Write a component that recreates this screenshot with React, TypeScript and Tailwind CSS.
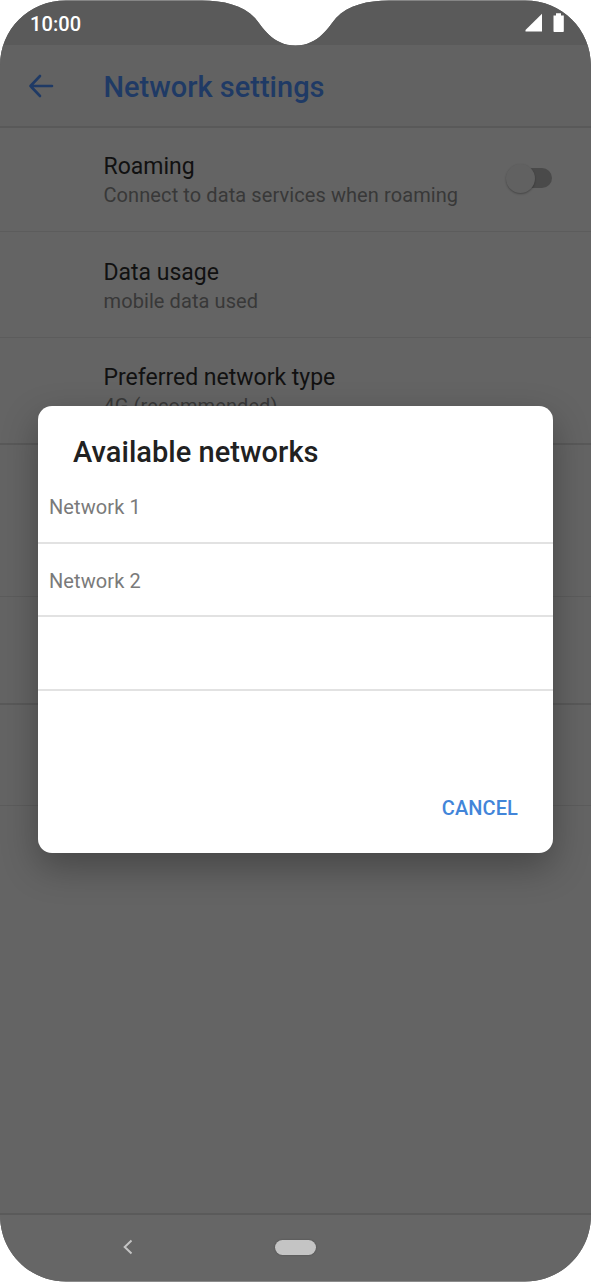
import React from "react";

type RowProps = { title?: string; detail?: string; className: string; children?: React.ReactNode };

function SettingRow({ title, detail, className, children }: RowProps) {
  return (
    <div className={`flex shrink-0 items-start justify-between pl-[103.5px] pr-[39px] ${className}`}>
      <div className="flex flex-col whitespace-nowrap">
        {title && <div className="text-[23px] leading-[30px] tracking-[-0.01px] text-[#111111]">{title}</div>}
        {detail && <div className="text-[20px] leading-[26px] tracking-[0.09px] text-[#383838]">{detail}</div>}
      </div>
      {children}
    </div>
  );
}

function Toggle() {
  return (
    <div className="relative mt-4 h-5 w-[41px] rounded-full bg-[#4a4a4a]">
      <div className="absolute -left-[5px] -top-[4px] size-[29px] rounded-full bg-[#616161] shadow-[0_1px_2px_rgba(0,0,0,0.3)]" />
    </div>
  );
}

function NetworkDialog() {
  return (
    <div className="absolute left-[38px] top-[406px] flex h-[446.5px] w-[515px] flex-col rounded-[14px] bg-white shadow-[0_14px_36px_rgba(0,0,0,0.3)]">
      <h2 className="h-[64px] pl-[35px] pt-[28px] text-[29px] font-medium leading-[36px] tracking-[0.04px] text-[#212121]">
        Available networks
      </h2>
      <ul>
        <li className="flex h-[74px] items-center border-b-2 border-[#e2e2e2] pl-[11px] pt-[2px] text-[20px] tracking-[0.09px] text-[#7a7a7a]">
          Network 1
        </li>
        <li className="flex h-[73px] items-center border-b-2 border-[#e2e2e2] pl-[11px] pt-[3px] text-[20px] tracking-[0.09px] text-[#7a7a7a]">
          Network 2
        </li>
        <li className="h-[74px] border-b-2 border-[#e2e2e2]" />
      </ul>
      <div className="mt-auto flex justify-end pb-[31px] pr-[35px]">
        <button className="text-[20px] font-medium leading-[28px] tracking-[0.08px] text-[#4285d9]">CANCEL</button>
      </div>
    </div>
  );
}

export default function App() {
  return (
    <div className="h-[1282px] w-[591px] overflow-hidden bg-white font-['Roboto',sans-serif]">
      <div className="relative flex h-[1281.5px] flex-col bg-[#646464] [clip-path:path('M66_0.5H202C223_0.5_243_5_255_18C262_26_272_45.5_295.5_45.5C319_45.5_329_26_336_18C348_5_368_0.5_389_0.5H525C562_0.5_591_29_591_66V1215C591_1252_562_1281.5_525_1281.5H66C29_1281.5_0_1252_0_1215V66C0_29_29_0.5_66_0.5Z')]">
        <header className="flex h-[45px] shrink-0 items-start justify-between bg-[#5a5a5a] pl-[30px] pr-[26px]">
          <span className="pt-[10px] text-[20px] font-medium leading-[28px] tracking-[0.1px] text-white">10:00</span>
          <svg width="40" height="20" viewBox="0 0 40 20" className="mt-[13px]" fill="white">
            <path d="M0.5 18.5V17L17 0.8V18.5Z" />
            <path d="M28.5 2.5H31V0.2H36V2.5H38.8V18C38.8 18.8 38.4 19 37.8 19H29.5C28.9 19 28.5 18.8 28.5 18Z" />
          </svg>
        </header>
        <div className="flex h-[83px] shrink-0 items-center border-b-2 border-[#595959] bg-[#626262] pl-[28px]">
          <svg width="26" height="24" viewBox="0 0 26 24" fill="none" stroke="#1f3a65" strokeWidth="2.6" strokeLinecap="round" strokeLinejoin="round">
            <path d="M24 12H2.5M12 2L2.5 12L12 22" />
          </svg>
          <h1 className="ml-[49.5px] pt-[2px] text-[29px] font-medium leading-[36px] text-[#1f3a65]">Network settings</h1>
        </div>
        <main className="flex flex-1 flex-col">
          <SettingRow className="h-[104px] border-b border-[#5c5c5c] pt-[24px]" title="Roaming" detail="Connect to data services when roaming">
            <Toggle />
          </SettingRow>
          <SettingRow className="h-[106px] border-b border-[#5c5c5c] pt-[26px]" title="Data usage" detail="mobile data used" />
          <SettingRow className="h-[107px] border-b-2 border-[#595959] pt-[25px]" title="Preferred network type" detail="4G (recommended)" />
          <SettingRow className="h-[152px] border-b border-[#5c5c5c]" />
          <SettingRow className="h-[108px] border-b-2 border-[#595959]" />
          <SettingRow className="h-[101px] border-b border-[#5c5c5c]" />
        </main>
        <nav className="flex h-[68.5px] shrink-0 items-center border-t-2 border-[#5a5a5a] bg-[#666666] pb-[2px] pl-[121px]">
          <svg width="12" height="16" viewBox="0 0 12 16" fill="none" stroke="#c4c4c4" strokeWidth="2">
            <path d="M10.5 1.5L3.7 8L10.5 14.5" />
          </svg>
          <div className="ml-[142px] h-[15px] w-[41px] rounded-full bg-[#c4c4c4] shadow-[0_0_2px_rgba(0,0,0,0.3)]" />
        </nav>
        <NetworkDialog />
      </div>
    </div>
  );
}
